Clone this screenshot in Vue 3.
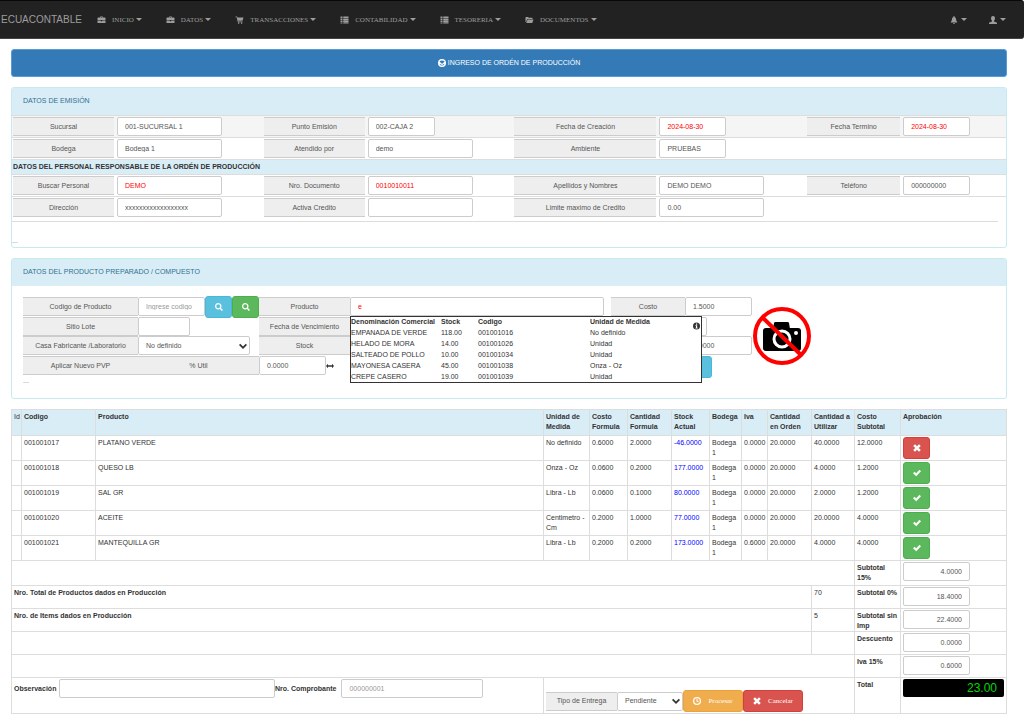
<script setup>
import { ref } from 'vue'

const icons = {
  case: 'M5 3V1.8Q5 1 5.8 1h4.4Q11 1 11 1.8V3h3.5Q16 3 16 4.5V8H0V4.500Q0 3 1.500 3zM6.300 3h3.400V2.200H6.300zM0 9h6.500v1.500h3V9H16v4.500q0 .5-.5.5H.5q-.5 0-.5-.5z',
  cart: 'M0 1h3.200l.6 2H16l-2 6.500H5.500l.4 1.500H14v1.500H4.700L2.200 2.500H0zM5 13h2.500v2.500H5zM11 13h2.500v2.500H11z',
  list: 'M0 1h4v3H0zM5.500 1H16v3.200H5.500zM0 5h4v3H0zM5.500 4.800H16v3.200H5.500zM0 9h4v3H0zM5.500 8.600H16v3.200H5.500zM0 13h4v2H0zM5.500 12.400H16v2.600H5.500z',
  folder: 'M0 12V3q0-1 1-1h4l1.500 1.500H13q1 0 1 1V6H3.500L1.200 12zM4.300 7H16l-2.500 7H1.500z',
  bell: 'M7 0h2v2q3 .8 3 4 0 4 2.500 6v1h-13v-1Q4 10 4 6q0-3.200 3-4zM6 14h4q-.5 2-2 2t-2-2z',
  user: 'M8 0q4 0 4 4.500 0 3-2 5V11l5 2q1 .5 1 1.500V16H0v-1.500Q0 13.500 1 13l5-2V9.500q-2-2-2-5Q4 0 8 0z',
  search: 'M6.500 0a6.500 6.500 0 0 1 5.400 10.100l4 4-2 2-4-4A6.500 6.500 0 1 1 6.500 0zm0 2.500a4 4 0 1 0 0 8 4 4 0 0 0 0-8z',
  cross: 'M4 .5L8 4.500 12 .5 15.500 4 11.500 8 15.500 12 12 15.500 8 11.500 4 15.500 .5 12 4.500 8 .5 4z',
  check: 'M13 1.500L16 4.500 6.500 14.500 0 8.500 3 5.500l3.500 3.200z',
  clock: 'M8 0a8 8 0 1 1 0 16A8 8 0 0 1 8 0zm0 2.500a5.500 5.500 0 1 0 0 11 5.500 5.500 0 0 0 0-11zM7 4h2v3.500l2.500 1-.8 1.800L7 9z',
  info: 'M8 0a8 8 0 1 1 0 16A8 8 0 0 1 8 0zM6.800 2.500v2.700h2.700V2.500zM5.500 6.500v1.500h1.300v4H5.500v1.500h5.200V12H9.500V6.500z',
  arrows: 'M4 3.500v3.200h8V3.500L16 8l-4 4.500V9.300H4v3.200L0 8z',
  chevron: 'M2.500 3.500L8 9 13.500 3.500 16 6 8 14 0 6z',
  gauge: 'M8 0a8 8 0 1 1 0 16A8 8 0 0 1 8 0zM3 5.500L6.500 8l1.500 2 2-2 3.300-2.500Q11.500 2.800 8 2.800T3 5.500zM3 9.500Q4 13.200 8 13.200t5-3.700L8 12z'
}

const menu = [
  { icon: 'case', text: 'INICIO' },
  { icon: 'case', text: 'DATOS' },
  { icon: 'cart', text: 'TRANSACCIONES' },
  { icon: 'list', text: 'CONTABILIDAD' },
  { icon: 'list', text: 'TESORERIA' },
  { icon: 'folder', text: 'DOCUMENTOS' }
]

const emission = ref([
  [
    { id: 'sucursal', label: 'Sucursal', value: '001-SUCURSAL 1' },
    { id: 'punto', label: 'Punto Emisión', value: '002-CAJA 2', short: true },
    { id: 'creacion', label: 'Fecha de Creación', value: '2024-08-30', short: true, red: true },
    { id: 'termino', label: 'Fecha Termino', value: '2024-08-30', short: true, red: true }
  ],
  [
    { id: 'bodega', label: 'Bodega', value: 'Bodega 1' },
    { id: 'atendido', label: 'Atendido por', value: 'demo' },
    { id: 'ambiente', label: 'Ambiente', value: 'PRUEBAS', short: true }
  ]
])

const personal = ref([
  [
    { id: 'buscar', label: 'Buscar Personal', value: 'DEMO', red: true },
    { id: 'documento', label: 'Nro. Documento', value: '0010010011', red: true },
    { id: 'nombres', label: 'Apellidos y Nombres', value: 'DEMO DEMO' },
    { id: 'telefono', label: 'Teléfono', value: '000000000', short: true }
  ],
  [
    { id: 'direccion', label: 'Dirección', value: 'xxxxxxxxxxxxxxxxxx' },
    { id: 'activa', label: 'Activa Credito', value: '' },
    { id: 'limite', label: 'Limite maximo de Credito', value: '0.00' }
  ]
])

const suggestions = [
  ['EMPANADA DE VERDE', '118.00', '001001016', 'No definido'],
  ['HELADO DE MORA', '14.00', '001001026', 'Unidad'],
  ['SALTEADO DE POLLO', '10.00', '001001034', 'Unidad'],
  ['MAYONESA CASERA', '45.00', '001001038', 'Onza - Oz'],
  ['CREPE CASERO', '19.00', '001001039', 'Unidad']
]

const heads = ['Id', 'Codigo', 'Producto', 'Unidad de Medida', 'Costo Formula', 'Cantidad Formula', 'Stock Actual', 'Bodega', 'Iva', 'Cantidad en Orden', 'Cantidad a Utilizar', 'Costo Subtotal', 'Aprobación']

const items = [
  { cells: ['', '001001017', 'PLATANO VERDE', 'No definido', '0.6000', '2.0000', '-46.0000', 'Bodega 1', '0.0000', '20.0000', '40.0000', '12.0000'], ok: false },
  { cells: ['', '001001018', 'QUESO LB', 'Onza - Oz', '0.0600', '0.2000', '177.0000', 'Bodega 1', '0.0000', '20.0000', '4.0000', '1.2000'], ok: true },
  { cells: ['', '001001019', 'SAL GR', 'Libra - Lb', '0.0600', '0.1000', '80.0000', 'Bodega 1', '0.0000', '20.0000', '2.0000', '1.2000'], ok: true },
  { cells: ['', '001001020', 'ACEITE', 'Centimetro - Cm', '0.2000', '1.0000', '77.0000', 'Bodega 1', '0.0000', '20.0000', '20.0000', '4.0000'], ok: true },
  { cells: ['', '001001021', 'MANTEQUILLA GR', 'Libra - Lb', '0.2000', '0.2000', '173.0000', 'Bodega 1', '0.6000', '20.0000', '4.0000', '4.0000'], ok: true }
]

const totals = ref([
  { id: 'sub15', label: 'Subtotal 15%', value: '4.0000' },
  { id: 'sub0', label: 'Subtotal 0%', value: '18.4000', note: 'Nro. Total de Productos dados en Producción', count: '70' },
  { id: 'subsin', label: 'Subtotal sin Imp', value: '22.4000', note: 'Nro. de Items dados en Producción', count: '5' },
  { id: 'descuento', label: 'Descuento', value: '0.0000', note: '', count: '' },
  { id: 'iva', label: 'Iva 15%', value: '0.6000' }
])
</script>

<template>
  <div class="page">
    <nav class="navbar">
      <a class="brand" href="#">ECUACONTABLE</a>
      <a v-for="m in menu" :key="m.text" class="nav-item" href="#">
        <svg class="icon nav-icon" viewBox="0 0 16 16"><path :d="icons[m.icon]" /></svg>
        <span>{{ m.text }}</span><i class="caret"></i>
      </a>
      <div class="nav-right">
        <a class="nav-item" href="#" aria-label="Notificaciones">
          <svg class="icon" viewBox="0 0 16 16"><path :d="icons.bell" /></svg><i class="caret"></i>
        </a>
        <a class="nav-item" href="#" aria-label="Usuario">
          <svg class="icon" viewBox="0 0 16 16"><path :d="icons.user" /></svg><i class="caret"></i>
        </a>
      </div>
    </nav>

    <main class="content">
      <button type="button" class="title-bar">
        <svg class="icon" viewBox="0 0 16 16"><path fill-rule="evenodd" :d="icons.gauge" /></svg>
        <span>INGRESO DE ORDÉN DE PRODUCCIÓN</span>
      </button>

      <section class="panel">
        <h2 class="panel-head">DATOS DE EMISIÓN</h2>
        <div v-for="(row, i) in emission" :key="i" class="row" :class="{ striped: i === 0 }">
          <template v-for="f in row" :key="f.id">
            <label class="tag" :for="f.id">{{ f.label }}</label>
            <input :id="f.id" v-model="f.value" class="field" :class="{ short: f.short, red: f.red }" type="text" />
          </template>
        </div>
        <h3 class="sub-head">DATOS DEL PERSONAL RESPONSABLE DE LA ORDÉN DE PRODUCCIÓN</h3>
        <div v-for="(row, i) in personal" :key="i" class="row">
          <template v-for="f in row" :key="f.id">
            <label class="tag" :for="f.id">{{ f.label }}</label>
            <input :id="f.id" v-model="f.value" class="field" :class="{ short: f.short, red: f.red }" type="text" />
          </template>
        </div>
        <div class="panel-end">...</div>
      </section>

      <section class="panel">
        <h2 class="panel-head">DATOS DEL PRODUCTO PREPARADO / COMPUESTO</h2>
        <div class="product">
          <div class="product-grid">
            <label class="tag" for="codigo">Codigo de Producto</label>
            <div class="group">
              <input id="codigo" class="field short" type="text" placeholder="Ingrese codigo" />
              <button type="button" class="btn info" aria-label="Buscar"><svg class="icon" viewBox="0 0 16 16"><path :d="icons.search" /></svg></button>
              <button type="button" class="btn success" aria-label="Buscar compuesto"><svg class="icon" viewBox="0 0 16 16"><path :d="icons.search" /></svg></button>
            </div>
            <label class="tag" for="producto">Producto</label>
            <div class="group search-box">
              <input id="producto" class="field red wide" type="text" value="e" />
              <div class="popup">
                <table class="suggest">
                  <colgroup><col class="s-name" /><col class="s-stock" /><col class="s-code" /><col /></colgroup>
                  <thead>
                    <tr><th>Denominación Comercial</th><th>Stock</th><th>Codigo</th><th>Unidad de Medida</th></tr>
                  </thead>
                  <tbody>
                    <tr v-for="s in suggestions" :key="s[2]"><td v-for="c in s" :key="c">{{ c }}</td></tr>
                  </tbody>
                </table>
                <svg class="icon popup-info" viewBox="0 0 16 16"><path fill-rule="evenodd" :d="icons.info" /></svg>
              </div>
            </div>
            <label class="tag" for="costo">Costo</label>
            <input id="costo" class="field short" type="text" value="1.5000" />

            <label class="tag" for="lote">Sitio Lote</label>
            <input id="lote" class="field tiny" type="text" />
            <label class="tag" for="vence">Fecha de Vencimiento</label>
            <input id="vence" class="field short" type="text" />
            <span></span>
            <input class="field stub" type="text" aria-label="Lote" />

            <label class="tag" for="casa">Casa Fabricante /Laboratorio</label>
            <div class="select-box casa">
              <select id="casa" class="field"><option>No definido</option></select>
              <svg class="icon chevron" viewBox="0 0 16 16"><path :d="icons.chevron" /></svg>
            </div>
            <label class="tag" for="stock">Stock</label>
            <input id="stock" class="field short" type="text" />
            <span></span>
            <input class="field short" type="text" value="0.0000" aria-label="Precio" />

            <label class="tag" for="pvp">Aplicar Nuevo PVP</label>
            <label class="tag" for="pvp">% Util</label>
            <div class="group">
              <input id="pvp" class="field short" type="text" value="0.0000" />
              <svg class="icon" viewBox="0 0 16 16"><path :d="icons.arrows" /></svg>
            </div>
            <button type="button" class="btn info add" aria-label="Agregar"></button>
          </div>
          <svg class="no-photo" viewBox="0 0 60 60" role="img" aria-label="Sin imagen">
            <rect x="11" y="22" width="38" height="23" rx="3" />
            <path d="M21 23l1-6q.3-1 1.500-1h12q1.200 0 1.500 1l1 6z" />
            <circle class="lens" cx="30" cy="33" r="8" />
            <circle class="dot" cx="44" cy="27" r="2" />
            <circle class="ban" cx="30" cy="30" r="27" />
            <path class="ban" d="M11 12L49 49" />
          </svg>
        </div>
        <div class="more">...</div>
      </section>

      <table class="items">
        <colgroup>
          <col class="w-id" /><col class="w-code" /><col /><col class="w-46" /><col class="w-38" /><col class="w-44" /><col class="w-38" />
          <col class="w-32" /><col class="w-26" /><col class="w-44" /><col class="w-43" /><col class="w-46" /><col class="w-last" />
        </colgroup>
        <thead>
          <tr><th v-for="h in heads" :key="h">{{ h }}</th></tr>
        </thead>
        <tbody>
          <tr v-for="it in items" :key="it.cells[1]">
            <td v-for="(c, i) in it.cells" :key="i" :class="{ blue: i === 6 }">{{ c }}</td>
            <td class="control">
              <button type="button" class="btn" :class="it.ok ? 'success' : 'danger'" :aria-label="it.ok ? 'Aprobado' : 'Rechazado'">
                <svg class="icon" viewBox="0 0 16 16"><path :d="it.ok ? icons.check : icons.cross" /></svg>
              </button>
            </td>
          </tr>
          <tr v-for="(t, i) in totals" :key="t.id" :class="{ sum: i > 0 }">
            <th v-if="t.note !== undefined" colspan="10">{{ t.note }}</th>
            <td v-if="t.note !== undefined">{{ t.count }}</td>
            <td v-else colspan="11"></td>
            <th><label :for="t.id">{{ t.label }}</label></th>
            <td class="control"><input :id="t.id" v-model="t.value" class="field short right" type="text" /></td>
          </tr>
          <tr class="final">
            <td colspan="3" class="control">
              <div class="notes">
                <label for="obs">Observación</label>
                <input id="obs" class="field obs" type="text" />
                <label for="comp">Nro. Comprobante</label>
                <input id="comp" class="field comp" type="text" placeholder="000000001" />
              </div>
            </td>
            <td colspan="8" class="control">
              <div class="actions">
                <label class="tag" for="entrega">Tipo de Entrega</label>
                <div class="select-box entrega">
                  <select id="entrega" class="field"><option>Pendiente</option></select>
                  <svg class="icon chevron" viewBox="0 0 16 16"><path :d="icons.chevron" /></svg>
                </div>
                <button type="button" class="btn warning text"><svg class="icon" viewBox="0 0 16 16"><path fill-rule="evenodd" :d="icons.clock" /></svg>Procesar</button>
                <button type="button" class="btn danger text"><svg class="icon" viewBox="0 0 16 16"><path :d="icons.cross" /></svg>Cancelar</button>
              </div>
            </td>
            <th><label for="total">Total</label></th>
            <td class="control"><input id="total" class="total" type="text" value="23.00" /></td>
          </tr>
        </tbody>
      </table>
    </main>
  </div>
</template>

<style>
body {
  margin: 0;
  background: #fff;
}
</style>

<style scoped>
* {
  box-sizing: border-box;
}
.page {
  font: 7px/10px "Liberation Sans", Arial, sans-serif;
  color: #333;
}
input,
select,
button {
  font: inherit;
  margin: 0;
}
h2,
h3 {
  margin: 0;
  font-size: 7px;
}
.icon {
  width: 8px;
  height: 8px;
  fill: currentColor;
  flex: none;
}
.navbar {
  display: flex;
  align-items: center;
  gap: 24px;
  height: 39px;
  padding: 0 18px 0 1px;
  background: #222;
  border-top: 1px solid #080808;
  border-bottom: 1px solid #444;
  border-radius: 0 3px 3px 0;
}
.navbar a {
  color: #9d9d9d;
  text-decoration: none;
}
.brand {
  width: 72px;
  white-space: nowrap;
  font-size: 10px;
}
.nav-item {
  display: flex;
  align-items: center;
  font-family: "Liberation Serif", serif;
}
.nav-icon {
  width: 9px;
  margin-right: 6px;
}
.caret {
  margin-left: 2px;
  border: 3px solid transparent;
  border-top-color: currentColor;
  border-bottom: 0;
}
.nav-right {
  display: flex;
  gap: 22px;
  margin-left: auto;
}
.nav-right .caret {
  margin-left: 3px;
}
.content {
  display: grid;
  grid-template-columns: minmax(0, 1fr);
  gap: 10px;
  padding: 10px 17px 10px 11px;
}
.title-bar {
  display: flex;
  align-items: center;
  justify-content: center;
  gap: 2px;
  height: 28px;
  border: 1px solid #5b9bd5;
  border-radius: 3px;
  background: #337ab7;
  color: #fff;
}
.panel {
  border: 1px solid #c5ebf0;
  border-radius: 3px;
}
.panel-head {
  height: 27px;
  padding: 8px 11px;
  background: #d9edf7;
  color: #31708f;
  font-weight: normal;
}
.row {
  display: grid;
  grid-template-columns: 101px 144fr 101px 144fr 142px 145fr 93px 103fr;
  column-gap: 3px;
  align-items: center;
  height: 22px;
  padding-left: 1px;
  border-top: 1px solid #ddd;
}
.striped {
  background: #f5f5f5;
}
.tag {
  display: flex;
  align-items: center;
  justify-content: center;
  height: 19px;
  border: solid #ccc;
  border-width: 1px 0;
  background: #eee;
  color: #555;
  white-space: nowrap;
}
.field {
  width: 105px;
  height: 19px;
  padding: 0 7px;
  border: 1px solid #ccc;
  border-radius: 2px;
  background: #fff;
  color: #555;
  font-weight: normal;
  outline: none;
}
.field::placeholder {
  color: #999;
}
.short {
  width: 67px;
}
.tiny {
  width: 52px;
}
.stub {
  width: 22px;
}
.red {
  color: red;
}
.right {
  text-align: right;
}
.sub-head {
  height: 15px;
  padding: 2px 1px;
  border-top: 1px solid #ddd;
  background: #d9edf7;
}
.panel-end {
  height: 26px;
  margin: 3px 8px 0 0;
  padding-top: 14px;
  border-top: 1px solid #ddd;
  color: #777;
}
.product {
  display: grid;
  grid-template-columns: minmax(0, 1fr) 60px;
  padding: 11px 194px 0 11px;
}
.product-grid {
  display: grid;
  grid-template-columns: 115px 121px 91px minmax(0, 1fr) 74px 67px;
  grid-template-rows: 20px 19px 20px 19px;
}
.group {
  display: flex;
  align-items: center;
  height: 19px;
}
.btn {
  display: flex;
  align-items: center;
  justify-content: center;
  width: 27px;
  height: 22px;
  padding: 0;
  border: 1px solid;
  border-radius: 3px;
  color: #fff;
}
.info {
  background: #5bc0de;
  border-color: #46b8da;
}
.success {
  background: #5cb85c;
  border-color: #4cae4c;
}
.danger {
  background: #d9534f;
  border-color: #d43f3a;
}
.warning {
  background: #f0ad4e;
  border-color: #eea236;
}
.text {
  gap: 7px;
  width: 60px;
  font-family: "Liberation Serif", serif;
}
.search-box {
  position: relative;
  padding-right: 7px;
}
.wide {
  width: 100%;
}
.popup {
  position: absolute;
  top: 19px;
  left: 0;
  z-index: 2;
  width: 352px;
  border: 1px solid #333;
  background: #fff;
}
.suggest {
  width: 100%;
  table-layout: fixed;
  border-collapse: collapse;
}
.s-name {
  width: 90px;
}
.s-stock {
  width: 37px;
}
.s-code {
  width: 112px;
}
.suggest th,
.suggest td {
  height: 10px;
  padding: 0;
  line-height: 10px;
  text-align: left;
  white-space: nowrap;
}
.suggest td {
  height: 11px;
}
.popup-info {
  position: absolute;
  top: 5px;
  right: 1px;
  width: 7px;
}
.select-box {
  display: grid;
  align-items: center;
}
.select-box > * {
  grid-area: 1 / 1;
}
.select-box .field {
  width: 100%;
  appearance: none;
}
.casa {
  width: 112px;
  height: 19px;
}
.chevron {
  justify-self: end;
  margin-right: 3px;
  pointer-events: none;
}
.add {
  grid-column: 6;
}
.no-photo {
  width: 60px;
  height: 60px;
  margin-top: 9px;
}
.lens,
.ban {
  fill: none;
  stroke: #fff;
  stroke-width: 3px;
}
.dot {
  fill: #fff;
}
.ban {
  stroke: red;
  stroke-width: 4px;
}
.more {
  height: 23px;
  padding: 1px 11px;
  color: #777;
}
.items {
  width: 100%;
  table-layout: fixed;
  border-collapse: collapse;
}
.items th,
.items td {
  height: 25px;
  padding: 2px 2px 0;
  border: 1px solid #ddd;
  text-align: left;
  vertical-align: top;
}
.items .control {
  padding-top: 1px;
}
.items thead th {
  height: 26px;
  background: #d9edf7;
}
.items thead th:first-child {
  font-weight: normal;
}
.items .sum th,
.items .sum td {
  height: 23px;
}
.items .final th,
.items .final td {
  height: 36px;
}
.items .blue {
  color: #00f;
}
.w-id { width: 10px; }
.w-code { width: 74px; }
.w-26 { width: 26px; }
.w-32 { width: 32px; }
.w-38 { width: 38px; }
.w-43 { width: 43px; }
.w-44 { width: 44px; }
.w-46 { width: 46px; }
.w-last { width: 106px; }
.notes {
  display: flex;
  align-items: center;
  font-weight: bold;
  white-space: nowrap;
}
.notes label {
  min-width: 45px;
}
.notes .obs {
  flex: 0 1 216px;
}
.notes .comp {
  width: 142px;
  margin-left: 5px;
}
.actions {
  display: flex;
  align-items: center;
  padding-top: 11px;
}
.actions .tag {
  width: 71px;
}
.entrega {
  width: 66px;
}
.total {
  display: block;
  width: 100%;
  height: 18px;
  padding: 0 7px;
  border: 0;
  border-radius: 2px;
  background: #000;
  color: #00d800;
  font-size: 12px;
  text-align: right;
}
</style>
